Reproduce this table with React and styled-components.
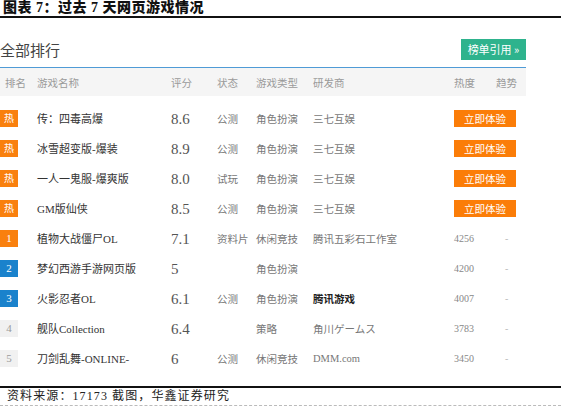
import React from 'react';
import styled, { createGlobalStyle } from 'styled-components';

const GlobalStyle = createGlobalStyle`
  html, body {
    margin: 0;
    padding: 0;
    background: #fff;
  }
  body {
    font-family: "Noto Sans CJK SC", sans-serif;
  }
`;

const Page = styled.div`
  width: 561px;
  height: 407px;
  display: flex;
  flex-direction: column;
  overflow: hidden;
`;

const Caption = styled.div`
  height: 16px;
  padding-left: 3px;
  border-bottom: 2px solid #111;
  font-family: "Liberation Serif", "Noto Sans CJK SC", serif;
  font-weight: 900;
  font-size: 14px;
  line-height: 16px;
  letter-spacing: 0.5px;
  color: #111;
`;

const TopBar = styled.div`
  width: 526px;
  display: flex;
  align-items: center;
  justify-content: space-between;
  margin-top: 20px;
  height: 22px;
`;

const Heading = styled.div`
  font-size: 15px;
  color: #444;
  line-height: 22px;
  margin-top: 1px;
`;

const CiteButton = styled.div`
  width: 65px;
  height: 21px;
  background: #2eb38d;
  color: #fff;
  font-size: 11px;
  line-height: 21px;
  text-align: center;
`;

const Table = styled.div`
  width: 526px;
  margin-top: 7px;
  border-top: 1px solid #4f9bd6;
`;

const Grid = styled.div`
  display: grid;
  grid-template-columns: 37px 134px 46px 39px 57px 141px 42px 30px;
  align-items: center;
`;

const HeadRow = styled(Grid)`
  height: 28px;
  background: #f5f5f5;
  font-size: 10.5px;
  color: #9a9a9a;
  margin-bottom: 7px;
`;

const HeadCell = styled.div`
  padding-left: ${p => p.$pad || 0}px;
`;

const Row = styled(Grid)`
  height: 30px;
`;

const Badge = styled.div`
  width: 18px;
  height: 17px;
  line-height: 17px;
  text-align: center;
  font-family: "Liberation Serif", "Noto Sans CJK SC", serif;
  font-size: ${p => (p.$hot ? 10 : 11)}px;
  color: ${p => (p.$kind === 'gray' ? '#9a9a9a' : '#fff')};
  background: ${p =>
    p.$kind === 'orange' ? '#f9800e' : p.$kind === 'blue' ? '#1a82cc' : '#f1f1f1'};
`;

const Name = styled.div`
  font-family: "Liberation Serif", "Noto Sans CJK SC", serif;
  font-size: 11px;
  color: #333;
  white-space: nowrap;
`;

const Score = styled.div`
  font-family: "Liberation Serif", serif;
  font-size: 15px;
  color: #555;
  margin-top: 3px;
`;

const Plain = styled.div`
  font-family: "Liberation Serif", "Noto Sans CJK SC", serif;
  font-size: 10.5px;
  color: ${p => (p.$bold ? '#222' : '#777')};
  font-weight: ${p => (p.$bold ? 700 : 400)};
  white-space: nowrap;
`;

const Heat = styled.div`
  font-family: "Liberation Serif", serif;
  font-size: 10px;
  color: #888;
`;

const Trend = styled.div`
  font-family: "Liberation Serif", serif;
  font-size: 10px;
  color: #bbb;
  padding-left: 9px;
`;

const PlayButton = styled.div`
  grid-column: span 2;
  width: 62px;
  height: 17px;
  line-height: 17px;
  background: #fb7d08;
  color: #fff;
  font-size: 10.5px;
  text-align: center;
`;

const Footer = styled.div`
  margin-top: auto;
  border-top: 2px solid #111;
  border-bottom: 1px dashed #bbb;
  height: 17px;
  margin-bottom: 1px;
  padding-left: 7px;
  font-family: "Liberation Serif", "Noto Sans CJK SC", serif;
  font-size: 12px;
  line-height: 17px;
  letter-spacing: 1.1px;
  color: #222;
`;

const rows = [
  { badge: '热', kind: 'orange', hot: true, name: '传：四毒高爆', score: '8.6', status: '公测', type: '角色扮演', dev: '三七互娱', play: true },
  { badge: '热', kind: 'orange', hot: true, name: '冰雪超变版-爆装', score: '8.9', status: '公测', type: '角色扮演', dev: '三七互娱', play: true },
  { badge: '热', kind: 'orange', hot: true, name: '一人一鬼服-爆爽版', score: '8.0', status: '试玩', type: '角色扮演', dev: '三七互娱', play: true },
  { badge: '热', kind: 'orange', hot: true, name: 'GM版仙侠', score: '8.5', status: '公测', type: '角色扮演', dev: '三七互娱', play: true },
  { badge: '1', kind: 'orange', name: '植物大战僵尸OL', score: '7.1', status: '资料片', type: '休闲竞技', dev: '腾讯五彩石工作室', heat: '4256' },
  { badge: '2', kind: 'blue', name: '梦幻西游手游网页版', score: '5', status: '', type: '角色扮演', dev: '', heat: '4200' },
  { badge: '3', kind: 'blue', name: '火影忍者OL', score: '6.1', status: '公测', type: '角色扮演', dev: '腾讯游戏', devBold: true, heat: '4007' },
  { badge: '4', kind: 'gray', name: '舰队Collection', score: '6.4', status: '', type: '策略', dev: '角川ゲームス', heat: '3783' },
  { badge: '5', kind: 'gray', name: '刀剑乱舞-ONLINE-', score: '6', status: '公测', type: '休闲竞技', dev: 'DMM.com', heat: '3450' },
];

export default function App() {
  return (
    <Page>
      <GlobalStyle />
      <Caption>图表 7：过去 7 天网页游戏情况</Caption>
      <TopBar>
        <Heading>全部排行</Heading>
        <CiteButton>榜单引用 »</CiteButton>
      </TopBar>
      <Table>
        <HeadRow>
          <HeadCell $pad={5}>排名</HeadCell>
          <HeadCell>游戏名称</HeadCell>
          <HeadCell>评分</HeadCell>
          <HeadCell>状态</HeadCell>
          <HeadCell>游戏类型</HeadCell>
          <HeadCell>研发商</HeadCell>
          <HeadCell>热度</HeadCell>
          <HeadCell>趋势</HeadCell>
        </HeadRow>
        {rows.map((r, i) => (
          <Row key={i}>
            <div>
              <Badge $kind={r.kind} $hot={r.hot}>{r.badge}</Badge>
            </div>
            <Name>{r.name}</Name>
            <Score>{r.score}</Score>
            <Plain>{r.status}</Plain>
            <Plain>{r.type}</Plain>
            <Plain $bold={r.devBold}>{r.dev}</Plain>
            {r.play ? (
              <PlayButton>立即体验</PlayButton>
            ) : (
              <>
                <Heat>{r.heat}</Heat>
                <Trend>-</Trend>
              </>
            )}
          </Row>
        ))}
      </Table>
      <Footer>资料来源：17173 截图，华鑫证券研究</Footer>
    </Page>
  );
}
